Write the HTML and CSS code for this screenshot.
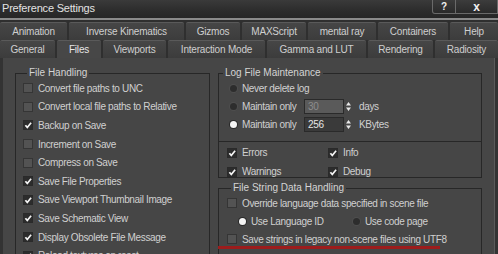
FILE: index.html
```html
<!DOCTYPE html>
<html lang="en">
<head>
    <meta charset="UTF-8">
    <title>Preference Settings</title>
    <link rel="stylesheet" href="styles.css">
</head>
<body>
    <div class="window">
        <div class="titlebar">
            <span class="title">Preference Settings</span>
            <div class="controls">
                <span class="ctl help">?</span>
                <span class="ctl close">x</span>
            </div>
        </div>

        <div class="tabs">
            <div class="tab-row">
                <span class="tab" style="width: 67px;">Animation</span>
                <span class="tab" style="width: 115px;">Inverse Kinematics</span>
                <span class="tab" style="width: 54px;">Gizmos</span>
                <span class="tab" style="width: 64px;">MAXScript</span>
                <span class="tab" style="width: 68px;">mental ray</span>
                <span class="tab" style="width: 70px;">Containers</span>
                <span class="tab" style="width: 48px;">Help</span>
            </div>
            <div class="tab-row">
                <span class="tab" style="width: 55px;">General</span>
                <span class="tab active" style="width: 44px;">Files</span>
                <span class="tab" style="width: 63px;">Viewports</span>
                <span class="tab" style="width: 97px;">Interaction Mode</span>
                <span class="tab" style="width: 99px;">Gamma and LUT</span>
                <span class="tab" style="width: 65px;">Rendering</span>
                <span class="tab" style="width: 63px;">Radiosity</span>
            </div>
        </div>

        <div class="panel">
            <div class="col-left">
                <fieldset class="group">
                    <legend>File Handling</legend>
                    <div class="row"><span class="check"></span>Convert file paths to UNC</div>
                    <div class="row"><span class="check"></span>Convert local file paths to Relative</div>
                    <div class="row"><span class="check on"></span>Backup on Save</div>
                    <div class="row"><span class="check"></span>Increment on Save</div>
                    <div class="row"><span class="check"></span>Compress on Save</div>
                    <div class="row"><span class="check on"></span>Save File Properties</div>
                    <div class="row"><span class="check on"></span>Save Viewport Thumbnail Image</div>
                    <div class="row"><span class="check on"></span>Save Schematic View</div>
                    <div class="row"><span class="check on"></span>Display Obsolete File Message</div>
                    <div class="row"><span class="check on"></span>Reload textures on reset</div>
                </fieldset>
            </div>

            <div class="col-right">
                <fieldset class="group log">
                    <legend>Log File Maintenance</legend>
                    <div class="row radio-row"><span class="radio"></span>Never delete log</div>
                    <div class="row radio-row">
                        <span class="radio"></span><span class="lbl">Maintain only</span>
                        <span class="spin disabled"><span class="val">30</span><span class="arrows"></span></span>
                        <span class="unit">days</span>
                    </div>
                    <div class="row radio-row">
                        <span class="radio on"></span><span class="lbl">Maintain only</span>
                        <span class="spin"><span class="val">256</span><span class="arrows"></span></span>
                        <span class="unit">KBytes</span>
                    </div>
                    <div class="levels">
                        <div class="row"><span class="check on"></span><span class="lvl">Errors</span><span class="check on"></span>Info</div>
                        <div class="row"><span class="check on"></span><span class="lvl">Warnings</span><span class="check on"></span>Debug</div>
                    </div>
                </fieldset>

                <fieldset class="group strings">
                    <legend>File String Data Handling</legend>
                    <div class="row"><span class="check"></span>Override language data specified in scene file</div>
                    <div class="row sub"><span class="radio on"></span><span class="opt">Use Language ID</span><span class="radio"></span>Use code page</div>
                    <div class="row marked"><span class="check"></span>Save strings in legacy non-scene files using UTF8</div>
                </fieldset>
            </div>
        </div>
    </div>
</body>
</html>
```

FILE: styles.css
```css
* {
    margin: 0;
    padding: 0;
    box-sizing: border-box;
}

body {
    background: #2b2b2b;
    font-family: 'Liberation Sans', Arial, sans-serif;
    font-size: 10px;
    color: #d0d0d0;
}

.window {
    width: 498px;
    height: 254px;
    overflow: hidden;
    background: #333;
}

/* title bar */
.titlebar {
    display: flex;
    justify-content: space-between;
    height: 20px;
    background: linear-gradient(180deg, #3a3a3a 0%, #2c2c2c 60%, #262626 100%);
    border-bottom: 2px solid #8a8a8a;
}

.title {
    padding-left: 2px;
    line-height: 16px;
    font-size: 11px;
    letter-spacing: -0.2px;
    color: #e2e2e2;
}

.controls {
    display: flex;
    height: 14px;
}

.ctl {
    display: flex;
    align-items: center;
    justify-content: center;
    height: 14px;
    color: #f0f0f0;
    font-weight: bold;
    background: linear-gradient(180deg, #3c3c3c, #2a2a2a);
    border: 1px solid #6a6a6a;
    border-top: none;
}

.help {
    width: 24px;
    border-radius: 0 0 0 3px;
    font-size: 10px;
}

.close {
    width: 42px;
    border-left: none;
    font-size: 12px;
}

/* tabs */
.tabs {
    padding-top: 2px;
    background: #2f2f2f;
}

.tab-row {
    display: flex;
    gap: 2px;
    height: 18px;
}

.tab {
    display: flex;
    align-items: center;
    justify-content: center;
    background: linear-gradient(180deg, #464646, #3c3c3c);
    border-top: 1px solid #5a5a5a;
    border-radius: 2px 2px 0 0;
    color: #cfcfcf;
    letter-spacing: -0.2px;
}

.tab.active {
    background: #474747;
    color: #e6e6e6;
}

/* content panel */
.panel {
    display: grid;
    grid-template-columns: 195px 264px;
    gap: 8px;
    height: 196px;
    margin-left: 3px;
    margin-right: 3px;
    padding: 9px 0 0 12px;
    background: #464646;
    border-right: 1px solid #5a5a5a;
}

.group {
    border: 1px solid #272727;
    padding: 0 0 0 7px;
}

.group legend {
    margin-left: 4px;
    padding: 0 2px;
    line-height: 12px;
    color: #d4d4d4;
}

.col-left .group {
    height: 220px;
}

.row {
    display: flex;
    align-items: center;
    height: 18.6px;
    white-space: nowrap;
    letter-spacing: -0.35px;
}

.check {
    flex: none;
    width: 10px;
    height: 10px;
    margin-right: 5px;
    background: #535353;
    border: 1px solid #353535;
}

.check.on {
    background: #2c2c2c url("data:image/svg+xml,%3Csvg xmlns='http://www.w3.org/2000/svg' viewBox='0 0 10 10'%3E%3Cpath d='M2 5l2 2.3L8 2.3' fill='none' stroke='%23f4f4f4' stroke-width='1.8'/%3E%3C/svg%3E") center / 9px no-repeat;
    border-color: #2a2a2a;
}

.radio {
    flex: none;
    width: 7px;
    height: 7px;
    margin: 0 5px 0 2px;
    border-radius: 50%;
    background: #2d2d2d;
    box-shadow: 0 0 0 1px #4e4e4e;
}

.radio.on {
    background: #f4f4f4;
    box-shadow: 0 0 0 1px #2a2a2a;
}

/* log group */
.log {
    height: 111px;
    padding: 0;
}

.log .radio-row {
    padding-left: 9px;
    height: 18px;
}

.lbl {
    width: 62px;
}

.spin {
    display: flex;
    height: 15px;
    width: 49px;
}

.spin .val {
    width: 40px;
    padding-left: 3px;
    line-height: 14px;
    background: #3a3a3a;
    border: 1px solid #2a2a2a;
    color: #e6e6e6;
}

.spin.disabled .val {
    background: #5a5a5a;
    color: #8d8d8d;
}

.arrows {
    width: 9px;
    background:
        url("data:image/svg+xml,%3Csvg xmlns='http://www.w3.org/2000/svg' viewBox='0 0 9 15'%3E%3Cpath d='M2 6.5L4.5 3L7 6.5Z M2 8.5L4.5 12L7 8.5Z' fill='%23e8e8e8'/%3E%3C/svg%3E") center / 9px 15px no-repeat;
}

.unit {
    margin-left: 6px;
}

.levels {
    margin-top: 8px;
    padding: 1px 0 0 8px;
    border-top: 1px solid #272727;
}

.levels .row {
    height: 19px;
}

.lvl {
    width: 86px;
}

/* file string group */
.strings {
    height: 80px;
    margin-top: 4px;
    padding-left: 8px;
}

.sub {
    padding-left: 10px;
}

.opt {
    width: 100px;
}

.strings .row {
    height: 18px;
}

.marked {
    position: relative;
}

.marked::after {
    content: '';
    position: absolute;
    left: -9px;
    top: 16px;
    width: 222px;
    height: 3px;
    background: #9c1c1c;
}
```
